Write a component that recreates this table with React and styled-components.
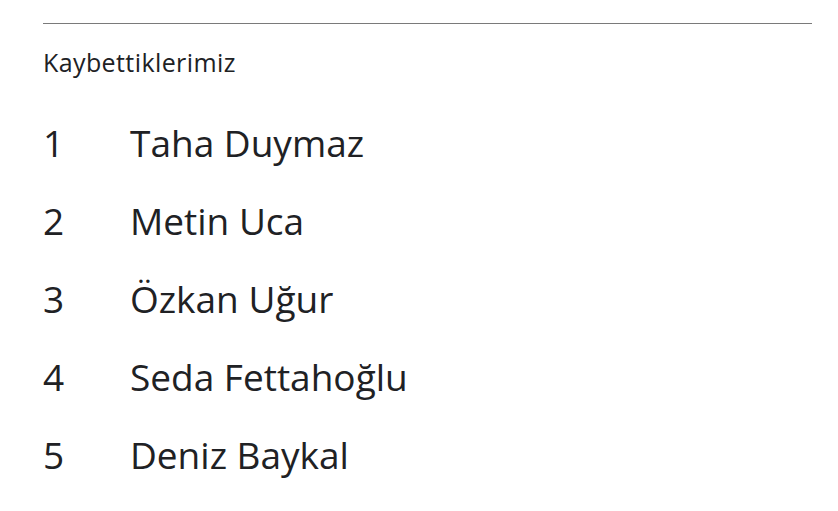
import React from "react";
import styled, { createGlobalStyle } from "styled-components";

const Global = createGlobalStyle`
  html, body { margin: 0; padding: 0; background: #fff; }
  body { font-family: "Open Sans", "Noto Sans", sans-serif; color: #202124; }
`;

const Page = styled.div`
  padding: 23px 26px 0 43px;
`;

const Rule = styled.hr`
  margin: 0;
  border: 0;
  border-top: 1px solid #7a7a7a;
`;

const Title = styled.h2`
  margin: 22px 0 0;
  font-size: 25px;
  font-weight: 400;
  line-height: 32px;
  letter-spacing: 0.4px;
  color: #202124;
`;

const List = styled.ol`
  list-style: none;
  margin: 38px 0 0;
  padding: 0;
  display: flex;
  flex-direction: column;
  gap: 24px;
`;

const Row = styled.li`
  display: grid;
  grid-template-columns: 87px 1fr;
  align-items: baseline;
  font-size: 37px;
  line-height: 54px;
  color: #202124;
`;

const Num = styled.span``;
const Name = styled.span``;

const names = ["Taha Duymaz", "Metin Uca", "Özkan Uğur", "Seda Fettahoğlu", "Deniz Baykal"];

export default function App() {
  return (
    <>
      <Global />
      <Page>
        <Rule />
        <Title>Kaybettiklerimiz</Title>
        <List>
          {names.map((n, i) => (
            <Row key={n}>
              <Num>{i + 1}</Num>
              <Name>{n}</Name>
            </Row>
          ))}
        </List>
      </Page>
    </>
  );
}
